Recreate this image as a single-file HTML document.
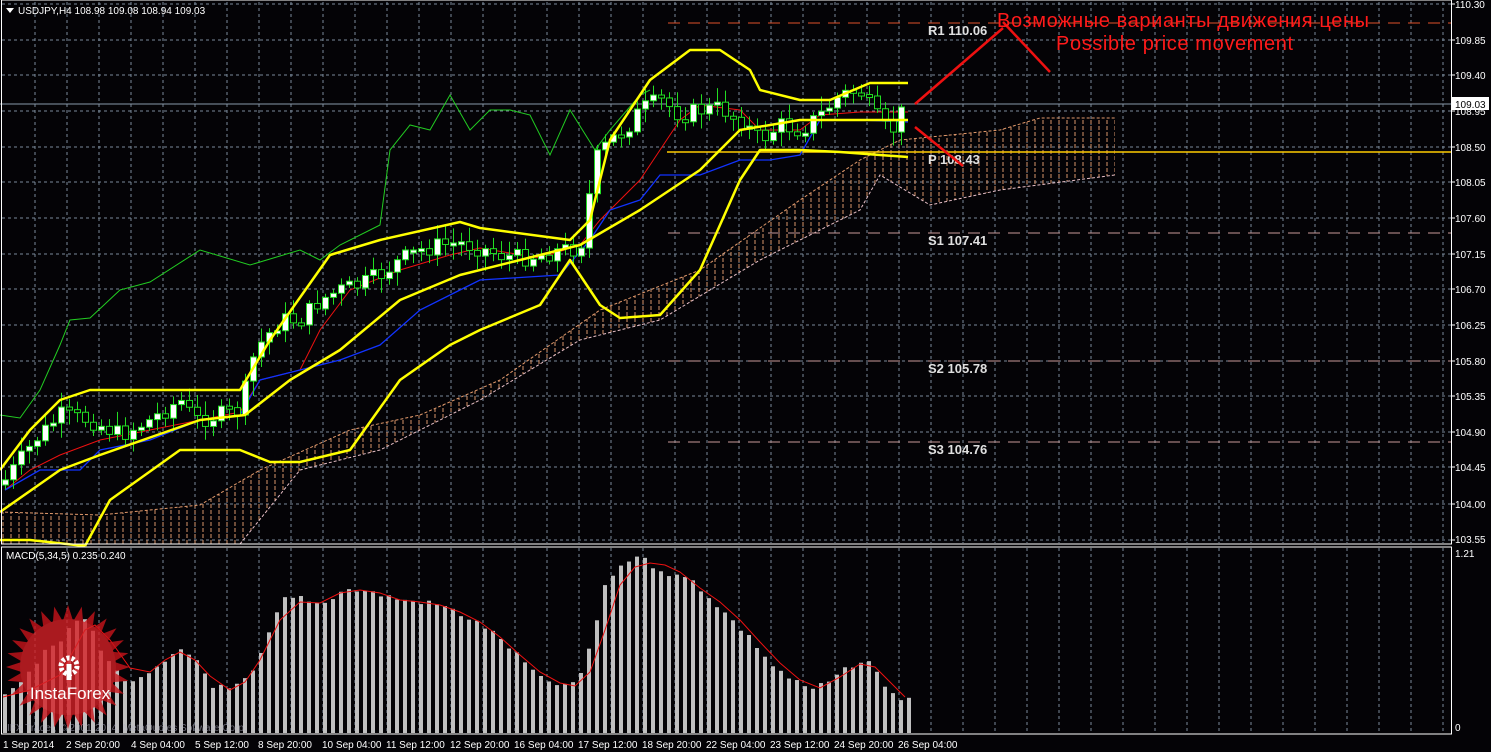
<!DOCTYPE html>
<html><head><meta charset="utf-8"><style>
html,body{margin:0;padding:0;background:#000;width:1491px;height:752px;overflow:hidden}
svg{display:block}
text{font-family:"Liberation Sans",sans-serif}
</style></head><body>
<svg id="s" width="1491" height="752" xmlns="http://www.w3.org/2000/svg">
<defs>
<pattern id="hatch" width="8" height="6" patternUnits="userSpaceOnUse">
<line x1="3" y1="0" x2="3" y2="4" stroke="#d8946a" stroke-width="1"/>
</pattern>
</defs>
<rect width="1491" height="752" fill="#040306"/>
<g id="grid"></g>
<!-- cloud -->
<path d="M0,512 L100,515 L200,505 L260,470 L350,430 L420,415 L500,380 L600,310 L700,270 L800,200 L860,160 L900,140 L1000,130 L1040,118 L1115,118 L1115,175 L1000,190 L930,205 L880,175 L860,210 L760,260 L660,320 L580,340 L480,400 L380,450 L300,470 L240,544 L0,544 Z" fill="url(#hatch)"/>
<polyline fill="none" stroke="#e29a6c" stroke-width="1" stroke-dasharray="3,2" points="0,512 100,515 200,505 260,470 350,430 420,415 500,380 600,310 700,270 800,200 860,160 900,140 1000,130 1040,118 1115,118"/>
<polyline fill="none" stroke="#e8c0c8" stroke-width="1" stroke-dasharray="3,2" points="240,544 300,470 380,450 480,400 580,340 660,320 760,260 860,210 880,175 930,205 1000,190 1115,175"/>
<!-- pivot levels -->
<line x1="668" y1="23" x2="1451" y2="23" stroke="#e0502a" stroke-dasharray="12,8"/>
<line x1="667" y1="152" x2="1451" y2="152" stroke="#ffcc00" stroke-width="1.5"/>
<line x1="668" y1="233" x2="1451" y2="233" stroke="#c89a98" stroke-dasharray="12,8"/>
<line x1="668" y1="361" x2="1451" y2="361" stroke="#c89a98" stroke-dasharray="12,8"/>
<line x1="668" y1="442" x2="1451" y2="442" stroke="#c89a98" stroke-dasharray="12,8"/>
<line x1="0" y1="104" x2="1451" y2="104" stroke="#8899aa" stroke-width="1"/>
<g font-family="Liberation Mono" font-size="13" font-weight="bold" fill="#e0e0e0">
<text x="928" y="35">R1 110.06</text>
<text x="928" y="164">P 108.43</text>
<text x="928" y="245">S1 107.41</text>
<text x="928" y="373">S2 105.78</text>
<text x="928" y="454">S3 104.76</text>
</g>
<!-- lines -->
<polyline fill="none" stroke="#22cc22" stroke-width="1" points="0,415 20,418 40,390 60,345 70,320 90,318 120,290 150,282 200,250 250,265 300,250 320,260 340,245 380,225 390,150 410,125 430,130 450,95 470,130 490,110 510,110 530,115 550,155 570,110 595,150 610,130 640,95 650,90"/>
<polyline fill="none" stroke="#ee1111" stroke-width="1" points="5,490 30,470 60,455 100,440 150,430 200,420 240,412 260,380 300,370 320,330 350,290 400,270 450,255 480,248 540,258 580,245 600,220 640,180 660,150 680,120 700,105 740,110 760,130 800,130 820,115 860,112 908,112"/>
<polyline fill="none" stroke="#1133ff" stroke-width="1.3" points="5,490 40,470 80,470 100,450 150,440 200,420 240,415 260,380 300,370 340,360 380,345 420,310 460,290 480,280 560,275 590,240 610,210 640,200 660,175 700,175 740,160 770,160 800,155 820,120 860,120 908,122"/>
<g id="candles"></g>
<g fill="none" stroke="#ffff00" stroke-width="2.5" stroke-linejoin="round">
<polyline points="0,470 30,430 60,400 90,390 240,390 270,340 330,255 380,240 460,222 480,228 570,240 590,220 610,140 650,80 690,50 720,50 750,70 760,90 800,100 830,100 870,83 908,83"/>
<polyline points="0,512 60,470 100,455 200,420 245,415 290,380 340,350 400,300 460,275 520,260 580,245 640,210 700,170 740,130 800,120 880,120 908,120"/>
<polyline points="0,540 30,540 85,546"/>
<polyline points="85,546 110,500 180,450 240,450 270,462 300,462 350,450 400,380 450,345 480,330 540,305 570,260 600,305 620,318 660,315 700,270 740,180 760,150 800,150 840,152 880,155 908,157"/>
</g>
<!-- annotation -->
<g stroke="#ee1111" stroke-width="2.5">
<line x1="915" y1="104" x2="1003" y2="28"/>
<line x1="1003" y1="22" x2="1050" y2="72"/>
<line x1="915" y1="127" x2="963" y2="166"/>
</g>
<text x="997" y="27" font-size="20" fill="#ff1a1a" textLength="372">Возможные варианты движения цены</text>
<text x="1056" y="50" font-size="20" fill="#ff1a1a" textLength="237">Possible price movement</text>
<!-- borders -->
<rect x="1.5" y="0" width="1450" height="544" fill="none" stroke="#fff" stroke-width="1"/>
<rect x="1.5" y="547" width="1450" height="187" fill="none" stroke="#fff" stroke-width="1"/>
<!-- MACD -->
<g id="macd"></g>
<polyline fill="none" stroke="#ee1111" stroke-width="1" points="3,697 30,690 60,675 85,630 95,625 110,640 130,668 150,672 165,660 180,652 195,660 210,676 230,690 245,682 260,660 280,620 300,602 320,603 340,593 360,590 380,593 400,600 420,602 440,605 460,612 480,622 500,637 520,655 540,672 560,683 575,686 590,672 605,630 620,585 635,567 650,563 665,565 680,572 700,588 720,602 740,620 760,642 780,663 800,680 820,688 840,677 860,664 875,667 890,682 905,697"/>
<text x="6" y="559" font-size="10" fill="#fff">MACD(5,34,5) 0.235 0.240</text>
<!-- logo -->
<g opacity="0.8">
<polygon id="star" fill="#c8141a"/>
<circle cx="68" cy="667" r="48" fill="#d42026"/>
</g>
<g fill="#fff" stroke="none">
<circle cx="69" cy="666" r="8" fill="none" stroke="#fff" stroke-width="5" stroke-dasharray="3,2"/>
<rect x="66.5" y="664" width="5" height="16"/>
</g>
<text x="70" y="699" font-size="17" fill="#fff" text-anchor="middle">InstaForex</text>
<text x="7" y="731" font-size="10" fill="#b0b0c0" opacity="0.6">IFX Trader, © 2001-2014, MetaQuotes Software Corp.</text>
<!-- axes labels -->
<g font-size="10" fill="#fff">
<text x="1455" y="8">110.30</text><text x="1455" y="44">109.85</text><text x="1455" y="79">109.40</text><text x="1455" y="115">108.95</text><text x="1455" y="151">108.50</text><text x="1455" y="186">108.05</text><text x="1455" y="222">107.60</text><text x="1455" y="258">107.15</text><text x="1455" y="293">106.70</text><text x="1455" y="329">106.25</text><text x="1455" y="365">105.80</text><text x="1455" y="400">105.35</text><text x="1455" y="436">104.90</text><text x="1455" y="471">104.45</text><text x="1455" y="508">104.00</text><text x="1455" y="543">103.55</text>
<text x="1455" y="557">1.21</text><text x="1455" y="731">0</text>
</g>
<rect x="1452" y="97" width="37" height="13" fill="#fff"/>
<text x="1455" y="108" font-size="10" fill="#000">109.03</text>
<g font-size="10" fill="#fff">
<text x="3" y="748">1 Sep 2014</text><text x="66" y="748">2 Sep 20:00</text><text x="131" y="748">4 Sep 04:00</text><text x="195" y="748">5 Sep 12:00</text><text x="258" y="748">8 Sep 20:00</text><text x="322" y="748">10 Sep 04:00</text><text x="386" y="748">11 Sep 12:00</text><text x="450" y="748">12 Sep 20:00</text><text x="514" y="748">16 Sep 04:00</text><text x="578" y="748">17 Sep 12:00</text><text x="642" y="748">18 Sep 20:00</text><text x="706" y="748">22 Sep 04:00</text><text x="770" y="748">23 Sep 12:00</text><text x="834" y="748">24 Sep 20:00</text><text x="898" y="748">26 Sep 04:00</text>
</g>
<polygon points="6,8 14,8 10,13" fill="#fff"/>
<text x="18" y="14" font-size="10" fill="#fff">USDJPY,H4  108.98 109.08 108.94 109.03</text>
</svg>
<script>
(function(){
var NS="http://www.w3.org/2000/svg";
function el(p,t,a){var e=document.createElementNS(NS,t);for(var k in a)e.setAttribute(k,a[k]);p.appendChild(e);return e;}
var g=document.getElementById('grid');
for(var x=35;x<1451;x+=32){el(g,'line',{x1:x,y1:2,x2:x,y2:543,stroke:'#7a8a9a','stroke-dasharray':'3,3'});el(g,'line',{x1:x,y1:548,x2:x,y2:733,stroke:'#7a8a9a','stroke-dasharray':'3,3'});}
[4,40,75,111,147,182,218,254,289,325,361,396,432,467,504,540].forEach(function(y){el(g,'line',{x1:2,y1:y,x2:1451,y2:y,stroke:'#7a8a9a','stroke-dasharray':'3,3'});el(g,'line',{x1:1451,y1:y,x2:1455,y2:y,stroke:'#fff'});});
function interp(pts,x){for(var i=0;i<pts.length-1;i++){if(x<=pts[i+1][0]){var a=pts[i],b=pts[i+1];return a[1]+(b[1]-a[1])*(x-a[0])/(b[0]-a[0]);}}return pts[pts.length-1][1];}
var seed=7;function rnd(){seed=(seed*9301+49297)%233280;return seed/233280;}
var path=[[5,480],[35,440],[60,415],[90,420],[120,435],[150,420],[180,400],[195,420],[220,415],[240,410],[255,350],[280,320],[300,320],[320,300],[340,290],[360,285],[380,275],[400,260],[420,250],[440,245],[460,243],[480,248],[500,255],[520,258],[540,255],[560,250],[580,248],[595,160],[610,140],[625,130],[640,110],[660,100],[680,115],[700,110],[720,108],[740,120],[760,140],[780,125],[800,130],[820,115],[840,95],[860,90],[875,115],[890,135],[905,105]];
var c=document.getElementById('candles');var prev=485;
for(var x=5;x<=907;x+=8){var cl=interp(path,x)+(rnd()-0.5)*18;var op=prev;var bt=Math.min(op,cl),bb=Math.max(op,cl);if(bb-bt<3)bb=bt+3;
el(c,'line',{x1:x+0.5,y1:bt-3-rnd()*12,x2:x+0.5,y2:bb+3+rnd()*12,stroke:'#22dd22'});
el(c,'rect',{x:x-2.5,y:bt,width:6,height:bb-bt,fill:cl<op?'#fff':'#000',stroke:'#22dd22'});prev=cl;}
var m=document.getElementById('macd');
var mp=[[5,690],[20,680],[40,655],[60,640],[75,620],[85,620],[100,650],[120,680],[140,680],[160,665],[180,650],[195,660],[210,685],[230,690],[250,675],[265,640],[280,600],[300,597],[320,605],[340,590],[360,590],[380,595],[400,600],[420,602],[440,605],[460,615],[480,625],[500,640],[520,660],[540,680],[560,685],[575,685],[590,640],[605,580],[620,565],[635,555],[650,565],[670,575],[690,580],[710,600],[730,620],[750,640],[770,665],[790,680],[810,690],[830,680],[850,665],[865,660],[880,680],[895,700],[905,697]];
for(var x2=3;x2<=907;x2+=8){var yy=interp(mp,x2)+(rnd()-0.5)*6;el(m,'rect',{x:x2,y:yy,width:4,height:733-yy,fill:'#c0c0c0'});}
var pts=[];for(var i=0;i<56;i++){var a=i*Math.PI/28,r=i%2?46:62;pts.push((68+r*Math.cos(a)).toFixed(1)+','+(667+r*Math.sin(a)).toFixed(1));}
document.getElementById('star').setAttribute('points',pts.join(' '));
})();
</script>
</body></html>
